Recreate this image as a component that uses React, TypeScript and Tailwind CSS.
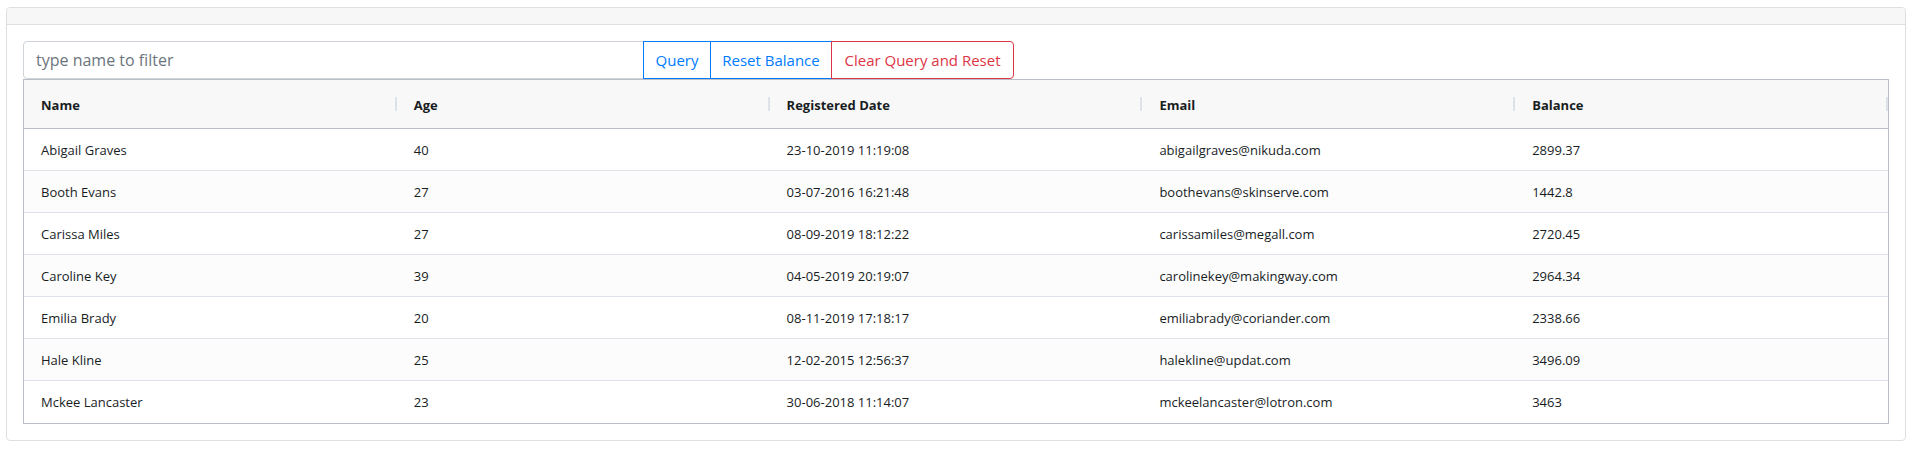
import { useState } from 'react';

interface Person {
  name: string;
  age: number;
  registered: string;
  email: string;
  balance: string;
}

const people: Person[] = [
  { name: 'Abigail Graves', age: 40, registered: '23-10-2019 11:19:08', email: 'abigailgraves@nikuda.com', balance: '2899.37' },
  { name: 'Booth Evans', age: 27, registered: '03-07-2016 16:21:48', email: 'boothevans@skinserve.com', balance: '1442.8' },
  { name: 'Carissa Miles', age: 27, registered: '08-09-2019 18:12:22', email: 'carissamiles@megall.com', balance: '2720.45' },
  { name: 'Caroline Key', age: 39, registered: '04-05-2019 20:19:07', email: 'carolinekey@makingway.com', balance: '2964.34' },
  { name: 'Emilia Brady', age: 20, registered: '08-11-2019 17:18:17', email: 'emiliabrady@coriander.com', balance: '2338.66' },
  { name: 'Hale Kline', age: 25, registered: '12-02-2015 12:56:37', email: 'halekline@updat.com', balance: '3496.09' },
  { name: 'Mckee Lancaster', age: 23, registered: '30-06-2018 11:14:07', email: 'mckeelancaster@lotron.com', balance: '3463' },
];

const columns = ['Name', 'Age', 'Registered Date', 'Email', 'Balance'];

export default function App() {
  const [filter, setFilter] = useState('');

  return (
    <div className="bg-white min-h-screen pt-[7px] pl-[6px] font-['Segoe_UI','Open_Sans',sans-serif] text-[#181d1f]">
      <div className="w-[1900px] border border-[#dfdfdf] rounded">
        {/* empty card header */}
        <div className="h-[17px] bg-[#f7f7f7] border-b border-[#dfdfdf] rounded-t" />

        <div className="p-4">
          {/* Filter bar */}
          <div className="flex h-[38px]">
            <input
              value={filter}
              onChange={(e) => setFilter(e.target.value)}
              placeholder="type name to filter"
              className="w-[621px] h-full border border-[#ced4da] rounded-l px-3 text-base text-[#495057] placeholder:text-[#6c757d] outline-none"
            />
            <button className="w-[68px] h-full border border-[#007bff] text-[#007bff] text-[15px] -ml-px">Query</button>
            <button className="w-[122px] h-full border border-[#007bff] text-[#007bff] text-[15px] -ml-px">Reset Balance</button>
            <button className="w-[183px] h-full border border-[#dc3545] text-[#dc3545] text-[15px] rounded-r -ml-px">Clear Query and Reset</button>
          </div>

          {/* Grid */}
          <div className="border border-[#babfc7] text-[13px]">
            <div className="grid grid-cols-5 h-[49px] bg-[#f8f8f8] border-b border-[#babfc7] font-bold">
              {columns.map((col) => (
                <div key={col} className="relative flex items-center pl-[17px] pt-[3px]">
                  {col}
                  <span className="absolute right-0 top-[17px] h-[14px] w-[2px] bg-[#dde2eb]" />
                </div>
              ))}
            </div>
            {people.map((p, i) => (
              <div
                key={p.name}
                className={`grid grid-cols-5 h-[42px] ${i < people.length - 1 ? 'border-b border-[#dde2eb]' : ''} ${i % 2 === 1 ? 'bg-[#fcfcfc]' : 'bg-white'}`}
              >
                <div className="flex items-center pl-[17px] pt-[2px]">{p.name}</div>
                <div className="flex items-center pl-[17px] pt-[2px]">{p.age}</div>
                <div className="flex items-center pl-[17px] pt-[2px]">{p.registered}</div>
                <div className="flex items-center pl-[17px] pt-[2px]">{p.email}</div>
                <div className="flex items-center pl-[17px] pt-[2px]">{p.balance}</div>
              </div>
            ))}
          </div>
        </div>
      </div>
    </div>
  );
}
